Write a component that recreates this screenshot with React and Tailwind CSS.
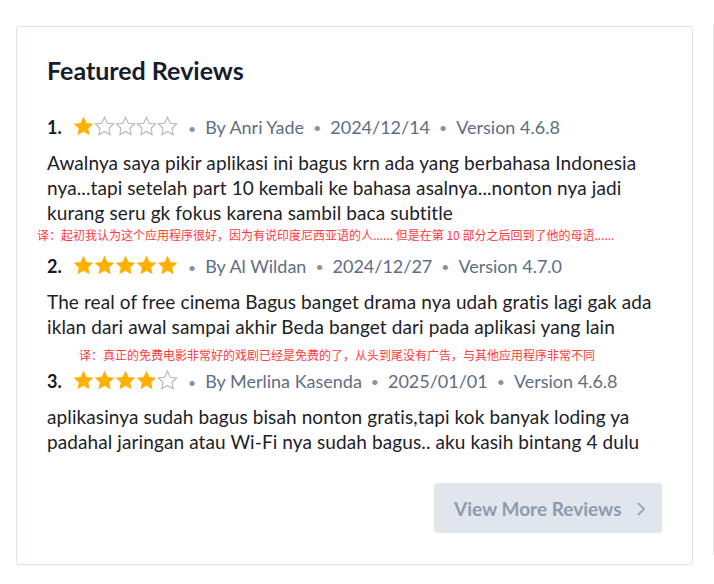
import React from 'react'

const reviews = [
  {
    n: 1,
    stars: 1,
    by: 'Anri Yade',
    date: '2024/12/14',
    version: '4.6.8',
    text: 'Awalnya saya pikir aplikasi ini bagus krn ada yang berbahasa Indonesia nya...tapi setelah part 10 kembali ke bahasa asalnya...nonton nya jadi kurang seru gk fokus karena sambil baca subtitle',
  },
  {
    n: 2,
    stars: 5,
    by: 'Al Wildan',
    date: '2024/12/27',
    version: '4.7.0',
    text: 'The real of free cinema Bagus banget drama nya udah gratis lagi gak ada iklan dari awal sampai akhir Beda banget dari pada aplikasi yang lain',
  },
  {
    n: 3,
    stars: 4,
    by: 'Merlina Kasenda',
    date: '2025/01/01',
    version: '4.6.8',
    text: 'aplikasinya sudah bagus bisah nonton gratis,tapi kok banyak loding ya padahal jaringan atau Wi-Fi nya sudah bagus.. aku kasih bintang 4 dulu',
  },
]

const STAR = 'M10 0.6l2.8 6 6.6.7-4.9 4.5 1.3 6.5L10 15l-5.8 3.3 1.3-6.5L.6 7.3l6.6-.7z'

function Star({ filled }) {
  return (
    <svg width="21" height="20" viewBox="0 0 20 19" className="block">
      {filled ? (
        <path d={STAR} fill="#ffb000" />
      ) : (
        <path d={STAR} fill="none" stroke="#b5b5b5" strokeWidth="1.1" transform="translate(0.6 0.6) scale(0.94)" />
      )}
    </svg>
  )
}

function Dot() {
  return <span className="mx-[9px] text-[#8892a0] text-[14px]">•</span>
}

function ReviewHead({ r }) {
  return (
    <div className="flex items-center h-[28px] text-[18px] text-[#5f6d85]">
      <span className="font-bold text-[#151a24] w-[26px]">{r.n}.</span>
      <div className="flex -mt-[3px]">
        {[0, 1, 2, 3, 4].map(i => (
          <Star key={i} filled={i < r.stars} />
        ))}
      </div>
      <span className="ml-[1px]"><Dot /></span>
      <span>By {r.by}</span>
      <Dot />
      <span>{r.date}</span>
      <Dot />
      <span>Version {r.version}</span>
    </div>
  )
}

function Note({ children, className }) {
  return (
    <p
      className={`text-[12px] leading-[14px] text-[#ff3b3b] whitespace-nowrap ${className}`}
      style={{ fontFamily: '"Noto Sans CJK SC", sans-serif' }}
    >
      {children}
    </p>
  )
}

function Body({ children }) {
  return (
    <p className="mt-[9px] text-[19px] leading-[25px] tracking-[0.1px] text-[#1d2128]">{children}</p>
  )
}

export default function App() {
  return (
    <div
      className="relative w-[714px] h-[584px] bg-white overflow-hidden"
      style={{ fontFamily: 'Lato, "Noto Sans CJK SC", sans-serif' }}
    >
      <div className="absolute left-[713px] top-[24px] w-px h-[531px] bg-[#e3e6ea]" />
      <div className="ml-[16px] mt-[26px] w-[677px] h-[539px] border border-[#dde3ea] rounded-[3px] pl-[30px] pr-[30px] pt-[29px]">
        <h2 className="text-[25px] leading-[28px] font-bold text-[#171c2a]">Featured Reviews</h2>

        <div className="mt-[29px]">
          <ReviewHead r={reviews[0]} />
          <Body>{reviews[0].text}</Body>
          <Note className="mt-[3px] -ml-[10px]">
            译：起初我认为这个应用程序很好，因为有说印度尼西亚语的人...... 但是在第 10 部分之后回到了他的母语......
          </Note>
        </div>

        <div className="mt-[10px]">
          <ReviewHead r={reviews[1]} />
          <Body>{reviews[1].text}</Body>
          <Note className="mt-[9px] ml-[32px]">
            译：真正的免费电影非常好的戏剧已经是免费的了，从头到尾没有广告，与其他应用程序非常不同
          </Note>
        </div>

        <div className="mt-[5px]">
          <ReviewHead r={reviews[2]} />
          <Body>{reviews[2].text}</Body>
        </div>

        <div className="flex justify-end mt-[29px]">
          <button className="flex items-center h-[50px] w-[228px] pl-[20px] pt-[2px] rounded-[4px] bg-[#e1e6ec] text-[19px] font-bold text-[#8d9bb0]">
            View More Reviews
            <svg width="10" height="16" viewBox="0 0 10 16" className="ml-[14px]">
              <path d="M2 2l6 6-6 6" fill="none" stroke="#8d9bb0" strokeWidth="1.6" />
            </svg>
          </button>
        </div>
      </div>
    </div>
  )
}
